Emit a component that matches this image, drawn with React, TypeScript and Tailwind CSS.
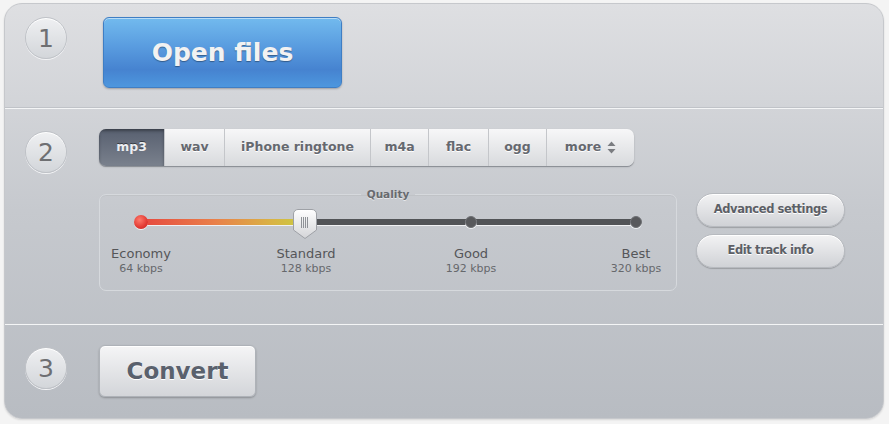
import React from "react";

const font = { fontFamily: '"DejaVu Sans", Verdana, sans-serif' };

function StepCircle({ n }: { n: string }) {
  return (
    <div className="w-[42px] h-[42px] shrink-0 rounded-full bg-gradient-to-b from-[#eff0f2] to-[#d3d6da] border border-[#bfc2c7] shadow-[0_1px_0_#f2f3f5,inset_0_1px_0_#ffffff] flex items-center justify-center text-[25px] leading-none text-[#6e6f72] font-normal">
      {n}
    </div>
  );
}

function Divider() {
  return (
    <div className="shrink-0">
      <div className="h-px bg-[#c0c3c8]" />
      <div className="h-px bg-[#f4f5f6]" />
    </div>
  );
}

const tabs: { label: string; w: string }[] = [
  { label: "wav", w: "w-[60px]" },
  { label: "iPhone ringtone", w: "w-[146px]" },
  { label: "m4a", w: "w-[58px]" },
  { label: "flac", w: "w-[60px]" },
  { label: "ogg", w: "w-[58px]" },
];

function SortIcon() {
  return (
    <svg width="9" height="13" viewBox="0 0 9 13" className="ml-[6px]">
      <path d="M4.5 0.5 L8.5 5 L0.5 5 Z" fill="#7a7c80" />
      <path d="M0.5 8 L8.5 8 L4.5 12.5 Z" fill="#7a7c80" />
    </svg>
  );
}

function Handle() {
  return (
    <svg width="24" height="31" viewBox="0 0 24 31" className="absolute left-[152px] top-0">
      <defs>
        <linearGradient id="hg" x1="0" y1="0" x2="0" y2="1">
          <stop offset="0" stopColor="#ffffff" />
          <stop offset="1" stopColor="#d4d5d8" />
        </linearGradient>
      </defs>
      <path
        d="M5 0.5 H19 A4.5 4.5 0 0 1 23.5 5 V21 L12 29.5 L0.5 21 V5 A4.5 4.5 0 0 1 5 0.5 Z"
        fill="url(#hg)"
        stroke="#9ea1a6"
      />
      <path d="M8.5 8 V19 M10.5 8 V19 M12.5 8 V19 M14.5 8 V19" stroke="#8f9297" strokeWidth="1" />
    </svg>
  );
}

function Slider() {
  return (
    <div className="relative w-[495px] h-[31px] ml-[41px] mt-[8px]">
      <div className="absolute left-0 right-0 top-[10px] h-[6px] rounded-full bg-[#525457] shadow-[0_1px_0_#f0f1f3]" />
      <div className="absolute left-0 w-[164px] top-[10px] h-[6px] bg-[linear-gradient(to_right,#e6483f,#e9804a_45%,#d9b344_80%,#c9cc42)] shadow-[0_1px_0_#f0f1f3]" />
      <div className="absolute left-[-7px] top-[6px] w-[14px] h-[14px] rounded-full bg-[radial-gradient(circle_at_40%_35%,#ff7a6c,#e23a33_60%,#c8282a)] shadow-[0_1px_0_#f4f4f4]" />
      <div className="absolute left-[324px] top-[7px] w-[12px] h-[12px] rounded-full bg-[#58595c] border border-[#6e7074] shadow-[0_1px_0_#eef0f2]" />
      <div className="absolute left-[489px] top-[7px] w-[12px] h-[12px] rounded-full bg-[#58595c] border border-[#6e7074] shadow-[0_1px_0_#eef0f2]" />
      <Handle />
    </div>
  );
}

const labels = [
  ["Economy", "64 kbps"],
  ["Standard", "128 kbps"],
  ["Good", "192 kbps"],
  ["Best", "320 kbps"],
];

function PillButton({ children }: { children: React.ReactNode }) {
  return (
    <button className="w-[149px] h-[34px] rounded-full bg-gradient-to-b from-[#f3f3f4] to-[#d0d2d6] border border-[#b7babf] shadow-[0_1px_1px_rgba(0,0,0,0.2),inset_0_1px_0_#ffffff] text-[11.5px] font-bold tracking-[-0.4px] text-[#5c5f66] [text-shadow:0_1px_0_#ffffff]">
      {children}
    </button>
  );
}

export default function App() {
  return (
    <div className="min-h-screen bg-[#f4f4f4] pt-[3px] pl-[4px]" style={font}>
      <div className="w-[880px] h-[416px] rounded-[18px] overflow-hidden border border-[#c6c8cc] bg-gradient-to-b from-[#dedfe2] via-[#c6c9ce] to-[#b8bcc2] flex flex-col shadow-[0_1px_2px_rgba(0,0,0,0.12)]">
        {/* Section 1 */}
        <div className="h-[103px] shrink-0 flex items-start pt-[13px] pl-[20px]">
          <StepCircle n="1" />
          <button className="ml-[36px] w-[239px] h-[71px] rounded-[6px] border border-[#3f7ec4] bg-[linear-gradient(to_bottom,#72baee,#5a9de0_40%,#4683d0_75%,#4d97de)] shadow-[0_1px_2px_rgba(0,0,0,0.25),inset_0_1px_0_rgba(255,255,255,0.5)] text-[25px] font-bold text-[#f2f2f2] [text-shadow:0_1px_1px_rgba(0,0,0,0.35)]">
            Open files
          </button>
        </div>
        <Divider />
        {/* Section 2 */}
        <div className="h-[214px] shrink-0 flex items-start pt-[20px] pl-[20px]">
          <div className="mt-[2px]">
            <StepCircle n="2" />
          </div>
          <div className="ml-[32px] flex flex-col">
            <div className="flex h-[37px] w-fit rounded-[7px] overflow-hidden shadow-[0_1px_0_#8d9197,0_1px_2px_rgba(0,0,0,0.2)] text-[12.5px] font-bold">
              <div className="w-[65px] flex items-center justify-center bg-gradient-to-b from-[#586070] to-[#7a818d] text-[#eceef1] [text-shadow:0_-1px_0_rgba(0,0,0,0.45)] shadow-[inset_0_2px_3px_rgba(0,0,0,0.35)]">
                mp3
              </div>
              {tabs.map((t) => (
                <div
                  key={t.label}
                  className={`${t.w} flex items-center justify-center border-l border-[#c4c6ca] bg-gradient-to-b from-[#f7f7f8] to-[#d8dadd] text-[#65686f] [text-shadow:0_1px_0_#ffffff]`}
                >
                  {t.label}
                </div>
              ))}
              <div className="w-[88px] flex items-center justify-center border-l border-[#c4c6ca] bg-gradient-to-b from-[#f7f7f8] to-[#d8dadd] text-[#65686f] [text-shadow:0_1px_0_#ffffff]">
                more
                <SortIcon />
              </div>
            </div>
            <div className="flex items-start mt-[22px]">
              <fieldset className="w-[578px] min-w-0 border border-[#d6d9dd] rounded-[7px] pb-[14px] shadow-[inset_0_1px_0_rgba(0,0,0,0.04)]">
                <legend className="mx-auto px-[6px] text-[10.5px] leading-[13px] font-bold text-[#686a6f] [text-shadow:0_1px_0_#e6e7ea]">
                  Quality
                </legend>
                <Slider />
                <div className="flex justify-between w-[575px] ml-[1px] mt-[6px]">
                  {labels.map(([a, b]) => (
                    <div key={a} className="w-[80px] flex flex-col items-center whitespace-nowrap">
                      <span className="text-[13px] leading-[16px] text-[#555659]">{a}</span>
                      <span className="text-[11px] leading-[14px] text-[#66686c]">{b}</span>
                    </div>
                  ))}
                </div>
              </fieldset>
              <div className="ml-[19px] mt-[5px] flex flex-col gap-[7px]">
                <PillButton>Advanced settings</PillButton>
                <PillButton>Edit track info</PillButton>
              </div>
            </div>
          </div>
        </div>
        <Divider />
        {/* Section 3 */}
        <div className="flex-1 flex items-start pt-[20px] pl-[20px]">
          <div className="mt-[2px]">
            <StepCircle n="3" />
          </div>
          <button className="ml-[32px] w-[157px] h-[52px] rounded-[6px] border border-[#aeb2b8] bg-gradient-to-b from-[#f5f5f6] to-[#d3d5d9] shadow-[0_1px_2px_rgba(0,0,0,0.25),inset_0_1px_0_#ffffff] text-[23px] font-bold text-[#5a616d] [text-shadow:0_1px_0_#ffffff]">
            Convert
          </button>
        </div>
      </div>
    </div>
  );
}
